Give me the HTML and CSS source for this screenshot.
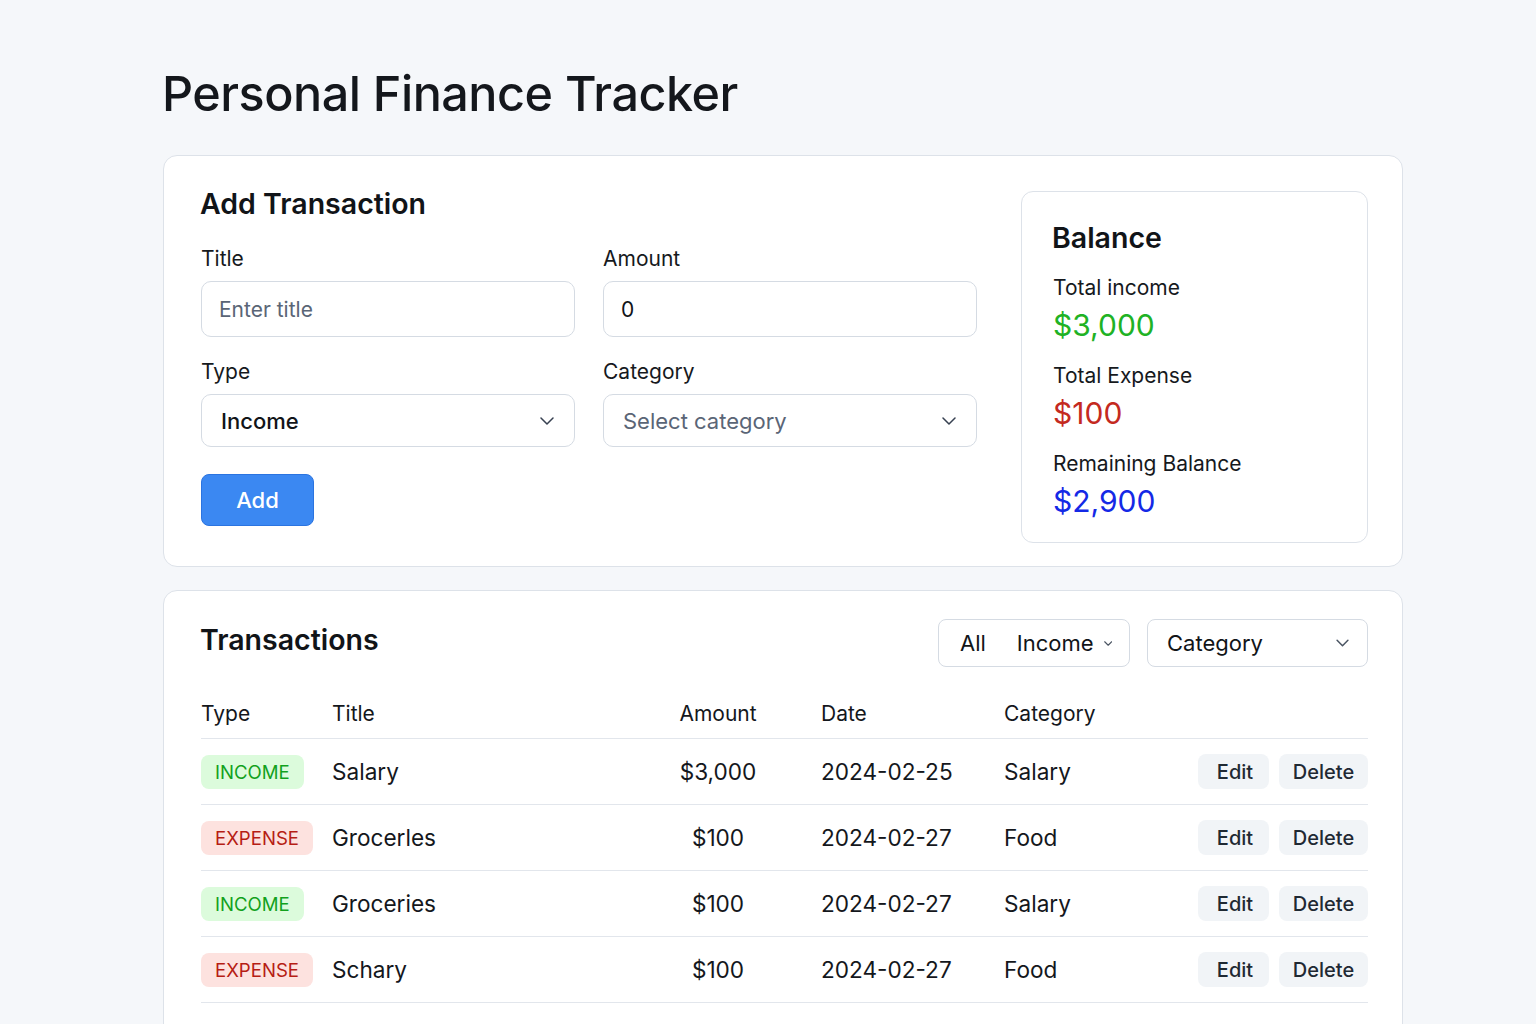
FILE: index.html
```html
<!DOCTYPE html>
<html lang="en">
<head>
<meta charset="utf-8">
<title>Personal Finance Tracker</title>
<link rel="stylesheet" href="styles.css">
</head>
<body>
<div class="page">
  <h1 class="page-title">Personal Finance Tracker</h1>

  <section class="card top-card">
    <div class="form-col">
      <h2 class="section-title">Add Transaction</h2>
      <div class="form-grid">
        <div class="field">
          <label class="label">Title</label>
          <div class="input placeholder">Enter title</div>
        </div>
        <div class="field">
          <label class="label">Amount</label>
          <div class="input">0</div>
        </div>
        <div class="field">
          <label class="label">Type</label>
          <div class="select strong"><span>Income</span>
            <svg class="chev" viewBox="0 0 14 8" width="14" height="8"><path d="M1 1l6 6 6-6" fill="none" stroke="#374151" stroke-width="1.5" stroke-linecap="round" stroke-linejoin="round"/></svg>
          </div>
        </div>
        <div class="field">
          <label class="label">Category</label>
          <div class="select placeholder"><span>Select category</span>
            <svg class="chev" viewBox="0 0 14 8" width="14" height="8"><path d="M1 1l6 6 6-6" fill="none" stroke="#374151" stroke-width="1.5" stroke-linecap="round" stroke-linejoin="round"/></svg>
          </div>
        </div>
      </div>
      <button class="btn-primary">Add</button>
    </div>

    <aside class="balance-card">
      <h2 class="section-title">Balance</h2>
      <div class="stat">
        <div class="stat-label">Total income</div>
        <div class="stat-value green">$3,000</div>
      </div>
      <div class="stat">
        <div class="stat-label">Total Expense</div>
        <div class="stat-value red">$100</div>
      </div>
      <div class="stat">
        <div class="stat-label">Remaining Balance</div>
        <div class="stat-value blue">$2,900</div>
      </div>
    </aside>
  </section>

  <section class="card tx-card">
    <div class="tx-head">
      <h2 class="section-title tx-title">Transactions</h2>
      <div class="filters">
        <div class="filter f-type"><span class="f-all">All</span><span>Income</span>
          <svg class="chev-s" viewBox="0 0 12 7" width="11" height="7"><path d="M1 1l5 5 5-5" fill="none" stroke="#4b5563" stroke-width="1.6" stroke-linecap="round" stroke-linejoin="round"/></svg>
        </div>
        <div class="filter f-cat"><span>Category</span>
          <svg class="chev-s" viewBox="0 0 12 7" width="13" height="8"><path d="M1 1l5 5 5-5" fill="none" stroke="#4b5563" stroke-width="1.4" stroke-linecap="round" stroke-linejoin="round"/></svg>
        </div>
      </div>
    </div>

    <div class="table">
      <div class="row head">
        <div>Type</div><div>Title</div><div class="amt">Amount</div><div class="date">Date</div><div>Category</div><div></div>
      </div>
      <div class="row">
        <div><span class="badge income">INCOME</span></div><div>Salary</div><div class="amt">$3,000</div><div class="date">2024-02-25</div><div>Salary</div>
        <div class="actions"><button class="btn-sm edit">Edit</button><button class="btn-sm del">Delete</button></div>
      </div>
      <div class="row">
        <div><span class="badge expense">EXPENSE</span></div><div>Grocerles</div><div class="amt">$100</div><div class="date">2024-02-27</div><div>Food</div>
        <div class="actions"><button class="btn-sm edit">Edit</button><button class="btn-sm del">Delete</button></div>
      </div>
      <div class="row">
        <div><span class="badge income">INCOME</span></div><div>Groceries</div><div class="amt">$100</div><div class="date">2024-02-27</div><div>Salary</div>
        <div class="actions"><button class="btn-sm edit">Edit</button><button class="btn-sm del">Delete</button></div>
      </div>
      <div class="row">
        <div><span class="badge expense">EXPENSE</span></div><div>Schary</div><div class="amt">$100</div><div class="date">2024-02-27</div><div>Food</div>
        <div class="actions"><button class="btn-sm edit">Edit</button><button class="btn-sm del">Delete</button></div>
      </div>
    </div>
  </section>
</div>
</body>
</html>
```

FILE: styles.css
```css
* { box-sizing: border-box; }

html, body {
  margin: 0;
  padding: 0;
  background: #f5f7fa;
  font-family: Inter, "Noto Sans", "Liberation Sans", sans-serif;
  color: #111418;
}

.page {
  width: 1240px;
  margin-left: 163px;
  padding-top: 64px;
}

.page-title {
  margin: 0 0 31px -1px;
  font-size: 48.5px;
  line-height: 60px;
  font-weight: 500;
  letter-spacing: -0.5px;
  color: #14171c;
}

.card {
  background: #fff;
  border: 1px solid #dde2e9;
  border-radius: 14px;
}

.top-card {
  display: flex;
  justify-content: space-between;
  align-items: flex-start;
  padding: 35px 34px 23px 37px;
}

.form-col {
  width: 775px;
  margin-top: -4px;
}

.section-title {
  margin: 0 0 0 -1px;
  font-size: 28.5px;
  line-height: 34px;
  font-weight: 600;
  color: #111418;
}

.form-grid {
  display: grid;
  grid-template-columns: 374px 374px;
  column-gap: 28px;
  row-gap: 22px;
  margin-top: 25px;
}

.field { display: flex; flex-direction: column; }

.label {
  font-size: 21px;
  line-height: 26px;
  color: #16191d;
  margin-bottom: 9px;
}

.input, .select {
  height: 56px;
  border: 1px solid #d5dbe3;
  border-radius: 10px;
  background: #fff;
  display: flex;
  align-items: center;
  padding: 0 18px 0 17px;
  font-size: 21px;
  color: #111418;
}

.select {
  height: 53px;
  justify-content: space-between;
  padding: 0 20px 0 19px;
  font-size: 22px;
}

.select.strong { font-weight: 500; }

.placeholder { color: #5a6576; }

.chev { display: block; }

.btn-primary {
  margin-top: 27px;
  width: 113px;
  height: 52px;
  background: #3b88f2;
  border: 1px solid #2b74e0;
  border-radius: 8px;
  color: #fff;
  font-family: inherit;
  font-size: 22px;
  font-weight: 500;
}

.balance-card {
  width: 347px;
  border: 1px solid #dde2e9;
  border-radius: 12px;
  padding: 29px 20px 23px 31px;
}

.stat { margin-top: 20px; }

.stat-label {
  font-size: 21px;
  line-height: 26px;
  color: #16191d;
}

.stat-value {
  margin-top: 6px;
  font-size: 30px;
  line-height: 36px;
  font-weight: 400;
}

.green { color: #20b224; }
.red { color: #c42a1f; }
.blue { color: #1429e6; }

.tx-card {
  margin-top: 23px;
  padding: 28px 34px 0 37px;
  height: 480px;
}

.tx-head {
  display: flex;
  justify-content: space-between;
  align-items: center;
}

.tx-title { margin-bottom: 6px; }

.filters {
  display: flex;
  gap: 17px;
}

.filter {
  height: 48px;
  border: 1px solid #d5dbe3;
  border-radius: 8px;
  display: flex;
  align-items: center;
  font-size: 22px;
  color: #111418;
}

.f-type { width: 192px; padding: 0 17px 0 21px; }
.f-all { margin-right: 31px; }
.f-type .chev-s { margin-left: 10px; }

.f-cat { width: 221px; padding: 0 18px 0 19px; justify-content: space-between; }

.table { margin-top: 22px; }

.row {
  display: grid;
  grid-template-columns: 131px 307px 158px 207px 1fr auto;
  align-items: center;
  height: 66px;
  border-bottom: 1px solid #e2e6ec;
  font-size: 22.6px;
  color: #14171c;
}

.row.head {
  height: 50px;
  font-size: 21px;
}

.amt { text-align: center; }
.date { padding-left: 24px; }

.badge {
  display: inline-block;
  height: 34px;
  line-height: 34px;
  padding: 0 14px;
  border-radius: 8px;
  font-size: 18.6px;
}

.badge.income { background: #dcfbdc; color: #12a11d; }
.badge.expense { background: #fde2df; color: #b61d14; }

.actions { display: flex; gap: 10px; }

.btn-sm {
  height: 35px;
  border: none;
  border-radius: 8px;
  background: #f1f4f7;
  font-family: inherit;
  font-size: 20px;
  font-weight: 500;
  color: #1f2933;
  padding: 0;
}

.btn-sm.edit { width: 71px; padding-left: 3px; }
.btn-sm.del { width: 89px; }
```
